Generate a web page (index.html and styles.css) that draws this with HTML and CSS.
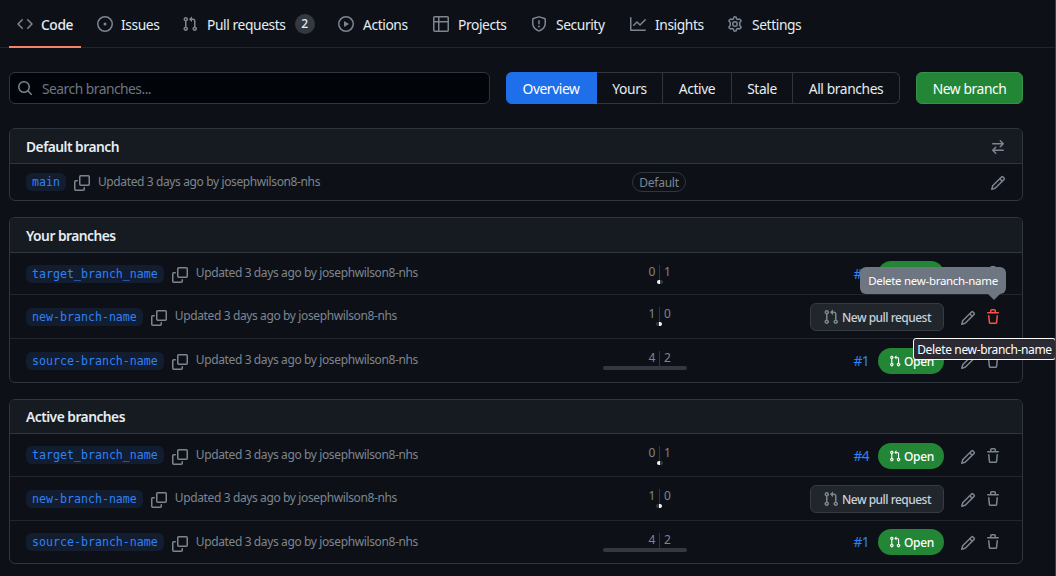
FILE: index.html
```html
<!DOCTYPE html>
<html lang="en">
<head>
<meta charset="utf-8">
<title>Branches</title>
<link rel="stylesheet" href="styles.css">
</head>
<body>
<svg class="sprite" aria-hidden="true">
  <symbol id="code" viewBox="0 0 16 16"><path d="m11.28 3.22 4.25 4.25a.75.75 0 0 1 0 1.06l-4.25 4.25a.749.749 0 0 1-1.275-.326.749.749 0 0 1 .215-.734L13.94 8l-3.72-3.72a.749.749 0 0 1 .326-1.275.749.749 0 0 1 .734.215Zm-6.56 0a.751.751 0 0 1 1.042.018.751.751 0 0 1 .018 1.042L2.06 8l3.72 3.72a.749.749 0 0 1-.326 1.275.749.749 0 0 1-.734-.215L.47 8.53a.75.75 0 0 1 0-1.06Z"/></symbol>
  <symbol id="issue" viewBox="0 0 16 16"><path d="M8 9.5a1.5 1.5 0 1 0 0-3 1.5 1.5 0 0 0 0 3Z"/><path d="M8 0a8 8 0 1 1 0 16A8 8 0 0 1 8 0ZM1.5 8a6.5 6.5 0 1 0 13 0 6.5 6.5 0 0 0-13 0Z"/></symbol>
  <symbol id="pr" viewBox="0 0 16 16"><path d="M1.5 3.25a2.25 2.25 0 1 1 3 2.122v5.256a2.251 2.251 0 1 1-1.5 0V5.372A2.25 2.25 0 0 1 1.5 3.25Zm5.677-.177L9.573.677A.25.25 0 0 1 10 .854V2.5h1A2.5 2.5 0 0 1 13.5 5v5.628a2.251 2.251 0 1 1-1.5 0V5a1 1 0 0 0-1-1h-1v1.646a.25.25 0 0 1-.427.177L7.177 3.427a.25.25 0 0 1 0-.354ZM3.75 2.5a.75.75 0 1 0 0 1.5.75.75 0 0 0 0-1.5Zm0 9.5a.75.75 0 1 0 0 1.5.75.75 0 0 0 0-1.5Zm8.25.75a.75.75 0 1 0 1.5 0 .75.75 0 0 0-1.5 0Z"/></symbol>
  <symbol id="play" viewBox="0 0 16 16"><path d="M8 0a8 8 0 1 1 0 16A8 8 0 0 1 8 0ZM1.5 8a6.5 6.5 0 1 0 13 0 6.5 6.5 0 0 0-13 0Zm4.879-2.773 4.264 2.559a.25.25 0 0 1 0 .428l-4.264 2.559A.25.25 0 0 1 6 10.559V5.442a.25.25 0 0 1 .379-.215Z"/></symbol>
  <symbol id="table" viewBox="0 0 16 16"><path d="M0 1.75C0 .784.784 0 1.75 0h12.5C15.216 0 16 .784 16 1.75v12.5A1.75 1.75 0 0 1 14.25 16H1.75A1.75 1.75 0 0 1 0 14.25ZM6.5 6.5v8h7.75a.25.25 0 0 0 .25-.25V6.5Zm8-1.5V1.75a.25.25 0 0 0-.25-.25H6.5V5Zm-13 1.5v7.75c0 .138.112.25.25.25H5v-8ZM5 5V1.5H1.75a.25.25 0 0 0-.25.25V5Z"/></symbol>
  <symbol id="shield" viewBox="0 0 16 16"><path d="M7.467.133a1.748 1.748 0 0 1 1.066 0l5.25 1.68A1.75 1.75 0 0 1 15 3.48V7c0 1.566-.32 3.182-1.303 4.682-.983 1.498-2.585 2.813-5.032 3.855a1.697 1.697 0 0 1-1.33 0c-2.447-1.042-4.049-2.357-5.032-3.855C1.32 10.182 1 8.566 1 7V3.48a1.75 1.75 0 0 1 1.217-1.667Zm.61 1.429a.25.25 0 0 0-.153 0l-5.25 1.68a.25.25 0 0 0-.174.238V7c0 1.358.275 2.666 1.057 3.86.784 1.194 2.121 2.34 4.366 3.297a.196.196 0 0 0 .154 0c2.245-.956 3.582-2.104 4.366-3.298C13.225 9.666 13.5 8.36 13.5 7V3.48a.251.251 0 0 0-.174-.237l-5.25-1.68ZM8.75 4.75v3a.75.75 0 0 1-1.5 0v-3a.75.75 0 0 1 1.5 0ZM9 10.5a1 1 0 1 1-2 0 1 1 0 0 1 2 0Z"/></symbol>
  <symbol id="graph" viewBox="0 0 16 16"><path d="M1.5 1.75V13.5h13.75a.75.75 0 0 1 0 1.5H.75a.75.75 0 0 1-.75-.75V1.75a.75.75 0 0 1 1.5 0Zm14.28 2.53-5.25 5.25a.75.75 0 0 1-1.06 0L7 7.06 4.28 9.78a.751.751 0 0 1-1.042-.018.751.751 0 0 1-.018-1.042l3.25-3.25a.75.75 0 0 1 1.06 0L10 7.94l4.72-4.72a.751.751 0 0 1 1.042.018.751.751 0 0 1 .018 1.042Z"/></symbol>
  <symbol id="gear" viewBox="0 0 16 16"><path fill="none" stroke="currentColor" stroke-width="1.5" stroke-linejoin="round" d="M6.9 1.05Q8 .5 9.1 1.05L9.55 2.9 10.7 3.55 12.55 3.05Q13.75 3.7 14.1 5L12.75 6.45V9.55L14.1 11Q13.75 12.3 12.55 12.95L10.7 12.45 9.55 13.1 9.1 14.95Q8 15.5 6.9 14.95L6.45 13.1 5.3 12.45 3.45 12.95Q2.25 12.3 1.9 11L3.25 9.55V6.45L1.9 5Q2.25 3.7 3.45 3.05L5.3 3.55 6.45 2.9Z"/><circle cx="8" cy="8" r="2.25" fill="none" stroke="currentColor" stroke-width="1.5"/></symbol>
  <symbol id="search" viewBox="0 0 16 16"><path d="M10.68 11.74a6 6 0 0 1-7.922-8.982 6 6 0 0 1 8.982 7.922l3.04 3.04a.749.749 0 0 1-.326 1.275.749.749 0 0 1-.734-.215ZM11.5 7a4.499 4.499 0 1 0-8.997 0A4.499 4.499 0 0 0 11.5 7Z"/></symbol>
  <symbol id="swap" viewBox="0 0 16 16"><path d="M5.22 14.78a.75.75 0 0 0 1.06-1.06L4.56 12h8.69a.75.75 0 0 0 0-1.5H4.56l1.72-1.72a.75.75 0 0 0-1.06-1.06l-3 3a.75.75 0 0 0 0 1.06l3 3Zm5.56-6.5a.75.75 0 1 1-1.06-1.06l1.72-1.72H2.75a.75.75 0 0 1 0-1.5h8.69L9.72 2.28a.75.75 0 0 1 1.06-1.06l3 3a.75.75 0 0 1 0 1.06l-3 3Z"/></symbol>
  <symbol id="pencil" viewBox="0 0 16 16"><path d="M11.013 1.427a1.75 1.75 0 0 1 2.474 0l1.086 1.086a1.75 1.75 0 0 1 0 2.474l-8.61 8.61c-.21.21-.47.364-.756.445l-3.251.93a.75.75 0 0 1-.927-.928l.929-3.25c.081-.286.235-.547.445-.758l8.61-8.61Zm.176 4.823L9.75 4.81l-6.286 6.287a.253.253 0 0 0-.064.108l-.558 1.953 1.953-.558a.253.253 0 0 0 .108-.064Zm1.238-3.763a.25.25 0 0 0-.354 0L10.811 3.75l1.439 1.44 1.263-1.263a.25.25 0 0 0 0-.354Z"/></symbol>
  <symbol id="trash" viewBox="0 0 16 16"><path d="M11 1.75V3h2.25a.75.75 0 0 1 0 1.5H2.75a.75.75 0 0 1 0-1.5H5V1.75C5 .784 5.784 0 6.75 0h2.5C10.216 0 11 .784 11 1.75ZM4.496 6.675l.66 6.6a.25.25 0 0 0 .249.225h5.19a.25.25 0 0 0 .249-.225l.66-6.6a.75.75 0 0 1 1.492.149l-.66 6.6A1.748 1.748 0 0 1 10.595 15h-5.19a1.75 1.75 0 0 1-1.741-1.575l-.66-6.6a.75.75 0 1 1 1.492-.15ZM6.5 1.75V3h3V1.75a.25.25 0 0 0-.25-.25h-2.5a.25.25 0 0 0-.25.25Z"/></symbol>
  <symbol id="copy" viewBox="0 0 16 16"><path d="M0 6.75C0 5.784.784 5 1.75 5h1.5a.75.75 0 0 1 0 1.5h-1.5a.25.25 0 0 0-.25.25v7.5c0 .138.112.25.25.25h7.5a.25.25 0 0 0 .25-.25v-1.5a.75.75 0 0 1 1.5 0v1.5A1.75 1.75 0 0 1 9.25 16h-7.5A1.75 1.75 0 0 1 0 14.25Z"/><path d="M5 1.75C5 .784 5.784 0 6.75 0h7.5C15.216 0 16 .784 16 1.75v7.5A1.75 1.75 0 0 1 14.25 11h-7.5A1.75 1.75 0 0 1 5 9.25Zm1.75-.25a.25.25 0 0 0-.25.25v7.5c0 .138.112.25.25.25h7.5a.25.25 0 0 0 .25-.25v-7.5a.25.25 0 0 0-.25-.25Z"/></symbol>
</svg>

<nav class="nav">
  <a class="tab current"><svg><use href="#code"/></svg><span>Code</span></a>
  <a class="tab"><svg><use href="#issue"/></svg><span>Issues</span></a>
  <a class="tab"><svg><use href="#pr"/></svg><span>Pull requests</span><b class="counter">2</b></a>
  <a class="tab"><svg><use href="#play"/></svg><span>Actions</span></a>
  <a class="tab"><svg><use href="#table"/></svg><span>Projects</span></a>
  <a class="tab"><svg><use href="#shield"/></svg><span>Security</span></a>
  <a class="tab"><svg><use href="#graph"/></svg><span>Insights</span></a>
  <a class="tab"><svg><use href="#gear"/></svg><span>Settings</span></a>
</nav>

<main class="page">
  <div class="toolbar">
    <div class="search"><svg><use href="#search"/></svg><span>Search branches...</span></div>
    <div class="segments">
      <a class="selected">Overview</a><a>Yours</a><a>Active</a><a>Stale</a><a>All branches</a>
    </div>
    <a class="new-branch">New branch</a>
  </div>

  <section class="box">
    <header><h2>Default branch</h2><svg><use href="#swap"/></svg></header>
    <div class="row default-row">
      <div class="name"><code>main</code><svg><use href="#copy"/></svg><span>Updated 3 days ago by josephwilson8-nhs</span></div>
      <div class="middle"><span class="label">Default</span></div>
      <div class="actions"><svg class="edit"><use href="#pencil"/></svg></div>
    </div>
  </section>

  <section class="box yours">
    <header><h2>Your branches</h2></header>
    <div class="row">
      <div class="name"><code>target_branch_name</code><svg><use href="#copy"/></svg><span>Updated 3 days ago by josephwilson8-nhs</span></div>
      <div class="counts ahead"><div class="behind-side"><span>0</span><i></i></div><div class="ahead-side"><span>1</span><i></i></div></div>
      <div class="actions"><a class="number">#4</a><span class="state"><svg><use href="#pr"/></svg><span>Open</span></span><svg class="edit"><use href="#pencil"/></svg><svg class="delete"><use href="#trash"/></svg></div>
    </div>
    <div class="row">
      <div class="name"><code>new-branch-name</code><svg><use href="#copy"/></svg><span>Updated 3 days ago by josephwilson8-nhs</span></div>
      <div class="counts behind"><div class="behind-side"><span>1</span><i></i></div><div class="ahead-side"><span>0</span><i></i></div></div>
      <div class="actions"><a class="new-pr"><svg><use href="#pr"/></svg><span>New pull request</span></a><svg class="edit"><use href="#pencil"/></svg><span class="delete-anchor"><svg class="delete danger"><use href="#trash"/></svg><span class="tooltip">Delete new-branch-name</span><span class="native-tip">Delete new-branch-name</span></span></div>
    </div>
    <div class="row">
      <div class="name"><code>source-branch-name</code><svg><use href="#copy"/></svg><span>Updated 3 days ago by josephwilson8-nhs</span></div>
      <div class="counts full"><div class="behind-side"><span>4</span><i></i></div><div class="ahead-side"><span>2</span><i></i></div></div>
      <div class="actions"><a class="number">#1</a><span class="state"><svg><use href="#pr"/></svg><span>Open</span></span><svg class="edit"><use href="#pencil"/></svg><svg class="delete"><use href="#trash"/></svg></div>
    </div>
  </section>

  <section class="box active">
    <header><h2>Active branches</h2></header>
    <div class="row">
      <div class="name"><code>target_branch_name</code><svg><use href="#copy"/></svg><span>Updated 3 days ago by josephwilson8-nhs</span></div>
      <div class="counts ahead"><div class="behind-side"><span>0</span><i></i></div><div class="ahead-side"><span>1</span><i></i></div></div>
      <div class="actions"><a class="number">#4</a><span class="state"><svg><use href="#pr"/></svg><span>Open</span></span><svg class="edit"><use href="#pencil"/></svg><svg class="delete"><use href="#trash"/></svg></div>
    </div>
    <div class="row">
      <div class="name"><code>new-branch-name</code><svg><use href="#copy"/></svg><span>Updated 3 days ago by josephwilson8-nhs</span></div>
      <div class="counts behind"><div class="behind-side"><span>1</span><i></i></div><div class="ahead-side"><span>0</span><i></i></div></div>
      <div class="actions"><a class="new-pr"><svg><use href="#pr"/></svg><span>New pull request</span></a><svg class="edit"><use href="#pencil"/></svg><svg class="delete"><use href="#trash"/></svg></div>
    </div>
    <div class="row">
      <div class="name"><code>source-branch-name</code><svg><use href="#copy"/></svg><span>Updated 3 days ago by josephwilson8-nhs</span></div>
      <div class="counts full"><div class="behind-side"><span>4</span><i></i></div><div class="ahead-side"><span>2</span><i></i></div></div>
      <div class="actions"><a class="number">#1</a><span class="state"><svg><use href="#pr"/></svg><span>Open</span></span><svg class="edit"><use href="#pencil"/></svg><svg class="delete"><use href="#trash"/></svg></div>
    </div>
  </section>
</main>
</body>
</html>
```
FILE: styles.css
```css
* { box-sizing: border-box; }

body {
  margin: 0;
  height: 576px;
  overflow: hidden;
  border-right: 1px solid #3a3d42;
  background: #0d1117;
  color: #e6edf3;
  font: 13.8px/20px "Noto Sans", "Open Sans", sans-serif;
  letter-spacing: -0.4px;
}

svg {
  width: 16px;
  height: 16px;
  flex: none;
  fill: currentColor;
  color: #7d8590;
}

.sprite { display: none; }

.nav {
  display: grid;
  grid-template-columns: 80px 85px 156px 95px 98px 99px 97px 100px;
  height: 48px;
  padding-left: 17px;
  border-bottom: 1px solid #21262d;
}

.tab {
  display: flex;
  align-items: center;
  height: 48px;
  gap: 9px;
}

.tab span { padding-top: 2px; white-space: nowrap; }
.tab:nth-child(2) span { margin-left: -1px; }

.tab.current {
  width: 72px;
  margin-left: -8px;
  padding-left: 8px;
  gap: 8px;
  border-bottom: 2px solid #f78166;
  padding-top: 2px;
  font-weight: 500;
}

.counter {
  width: 20px;
  height: 20px;
  border-radius: 10px;
  background: #343941;
  font-size: 12px;
  font-weight: 500;
  text-align: center;
}

.page { padding: 24px 0 0 9px; width: 1023px; }

.toolbar { display: flex; gap: 16px; height: 32px; margin-bottom: 24px; }

.search {
  display: flex;
  align-items: center;
  width: 481px;
  padding-left: 7px;
  gap: 9px;
  border: 1px solid #30363d;
  border-radius: 6px;
  background: #010409;
  color: #6e7681;
}

.search span { padding-top: 2px; letter-spacing: -0.5px; }

.segments {
  display: grid;
  grid-template-columns: 91px 66px 69px 61px 107px;
  width: 394px;
  text-align: center;
}

.segments a {
  height: 32px;
  border: 1px solid #30363d;
  border-left: 0;
  line-height: 32px;
}

.segments .selected {
  border-color: #1f6feb;
  border-radius: 6px 0 0 6px;
  background: #1f6feb;
  color: #fff;
}

.segments a:last-child { border-radius: 0 6px 6px 0; }

.new-branch {
  width: 107px;
  border: 1px solid #38914a;
  border-radius: 6px;
  background: #238636;
  color: #fff;
  line-height: 32px;
  text-align: center;
}

.box {
  width: 1014px;
  margin-bottom: 16px;
  border: 1px solid #30363d;
  border-radius: 6px;
}

.box header {
  display: flex;
  align-items: center;
  justify-content: space-between;
  height: 35px;
  padding: 2px 16px 0;
  border-bottom: 1px solid #30363d;
  border-radius: 5px 5px 0 0;
  background: #161b22;
}

h2 { margin: 0; font-size: 13.8px; font-weight: 600; letter-spacing: -0.52px; }

.row {
  display: grid;
  grid-template-columns: 577px 84px 1fr;
  height: 44px;
  padding: 0 16px;
  border-top: 1px solid #21262d;
}

header + .row { border-top: 0; }
.default-row { height: 36px; }
.yours header + .row { height: 41px; }
.active header { height: 34px; padding-top: 1px; }
.active header + .row { height: 42px; }
.active .row:last-child { height: 43px; }

.name { display: flex; align-items: center; gap: 8px; color: #7d8590; font-size: 12px; letter-spacing: -0.38px; }
.name svg { position: relative; top: 1.5px; }
.default-row .name svg { top: 0.5px; }
.yours .name span, .active .name span { padding-bottom: 1px; }

code {
  height: 18px;
  padding: 0 6px;
  border-radius: 6px;
  background: #121d2f;
  color: #2f81f7;
  font: 11.62px/18px "DejaVu Sans Mono", monospace;
  letter-spacing: 0;
}

.middle { display: flex; align-items: center; justify-content: center; width: 112px; }

.label {
  width: 54px;
  height: 20px;
  border: 1px solid #30363d;
  border-radius: 10px;
  color: #7d8590;
  font-size: 12px;
  line-height: 19px;
  text-align: center;
  letter-spacing: -0.25px;
}

.counts {
  display: grid;
  grid-template-columns: 57px 1fr;
  height: 19px;
  margin-top: 12px;
  color: #7d8590;
  font-size: 12px;
  line-height: 14px;
}

.behind-side, .ahead-side { display: flex; flex-direction: column; justify-content: space-between; }
.behind-side { align-items: flex-end; border-right: 1px solid #30363d; }
.behind-side span { padding-right: 4px; }
.ahead-side span { padding-left: 4px; }
.counts i { height: 4px; width: 3px; background: #343941; }
.behind-side i { margin-right: -1px; border-radius: 2px 0 0 2px; }
.ahead-side i { border-radius: 0 2px 2px 0; }
.behind .behind-side i { margin-right: 0; }
.behind .ahead-side i { margin-left: -1px; }
.full .behind-side i { width: 57px; }
.full .ahead-side i { width: 27px; }
.ahead .behind-side i, .behind .ahead-side i { background: #f0f3f6; }

.actions { display: flex; align-items: center; justify-content: flex-end; }
.number { margin-right: 9px; color: #2f81f7; letter-spacing: -0.6px; }

.state {
  display: flex;
  align-items: center;
  gap: 3px;
  width: 66px;
  height: 26px;
  padding-left: 11px;
  border-radius: 13px;
  background: #238636;
  color: #fff;
  font-weight: 500;
  font-size: 12px;
}

.active .row:nth-child(2) .actions { padding-top: 1px; }
.state svg { width: 12px; height: 12px; color: #fff; }
.state span { padding-top: 2px; letter-spacing: -0.3px; }
.new-pr span { padding-top: 2px; }

.new-pr {
  display: flex;
  align-items: center;
  gap: 3px;
  width: 134px;
  height: 28px;
  padding-left: 12px;
  border: 1px solid #363b42;
  border-radius: 6px;
  background: #21262d;
  color: #c9d1d9;
  font-size: 12px;
  font-weight: 500;
  letter-spacing: -0.52px;
}

.edit { margin-left: 16px; position: relative; top: 1px; }
.delete { margin-left: 9px; margin-right: 5px; }
.danger { color: #f85149; }
.delete-anchor { position: relative; display: flex; }

.tooltip {
  position: absolute;
  z-index: 1;
  right: 0;
  bottom: 31px;
  width: 146px;
  height: 27px;
  border-radius: 6px;
  background: #6e7681;
  color: #fff;
  font-size: 11.5px;
  letter-spacing: -0.3px;
  line-height: 28px;
  text-align: center;
  white-space: nowrap;
}

.tooltip::after {
  content: "";
  position: absolute;
  top: 27px;
  right: 6px;
  border: 6px solid transparent;
  border-top-color: #6e7681;
  border-bottom: 0;
}

.native-tip {
  position: absolute;
  z-index: 2;
  right: -50px;
  top: 29px;
  width: 143px;
  height: 22px;
  border: 1px solid #fff;
  border-radius: 3px;
  background: #2b2a33;
  color: #fff;
  font-size: 12px;
  letter-spacing: -0.35px;
  line-height: 22px;
  text-align: center;
  white-space: nowrap;
}
```
